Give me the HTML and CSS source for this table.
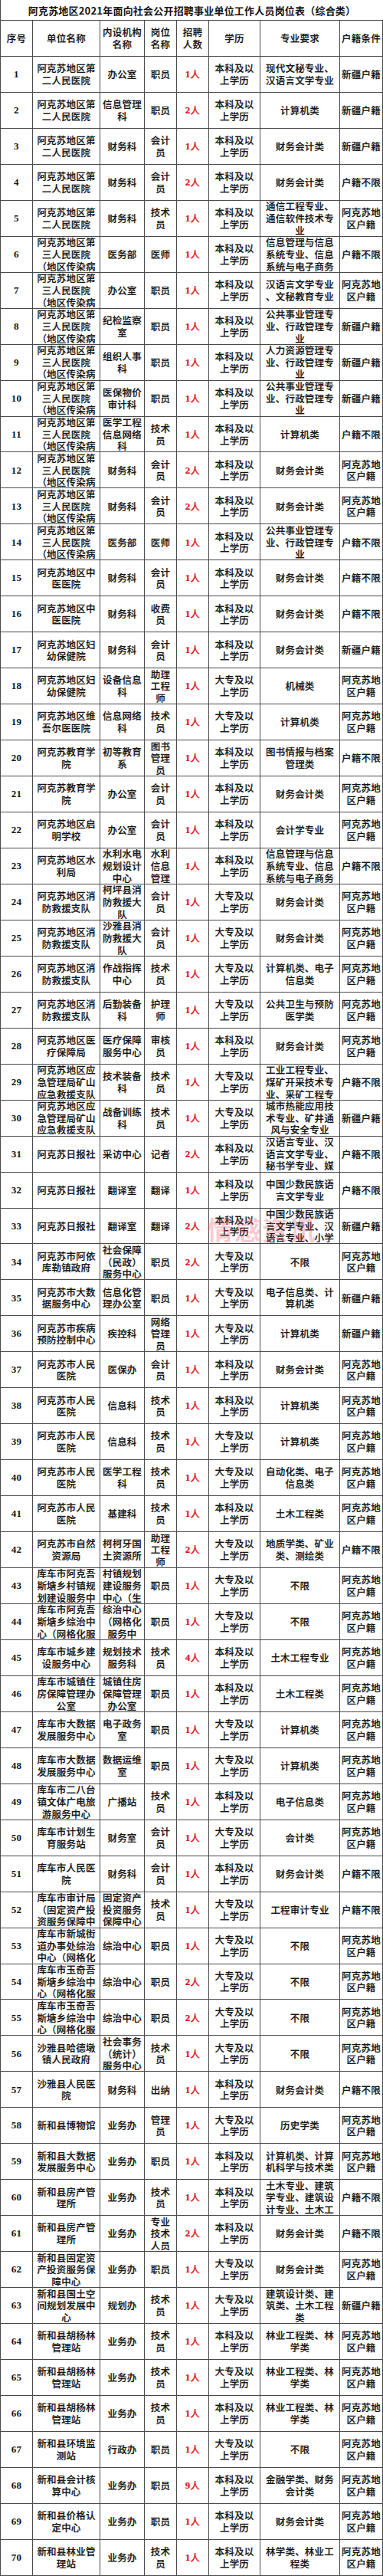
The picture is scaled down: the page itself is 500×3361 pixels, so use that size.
FILE: index.html
```html
<!DOCTYPE html>
<html lang="zh-CN">
<head>
<meta charset="utf-8">
<title>阿克苏地区2021年面向社会公开招聘事业单位工作人员岗位表（综合类）</title>
<link rel="stylesheet" href="styles.css">
</head>
<body>
<div class="page">
<div class="sheet">
<div class="title">阿克苏地区2021年面向社会公开招聘事业单位工作人员岗位表（综合类）</div>
<div class="c h">序号</div><div class="c h">单位名称</div><div class="c h">内设机构<br>名称</div><div class="c h">岗位<br>名称</div><div class="c h">招聘<br>人数</div><div class="c h">学历</div><div class="c h">专业要求</div><div class="c h">户籍条件</div>

<div class="c n">1</div><div class="c">阿克苏地区第<br>二人民医院</div><div class="c">办公室</div><div class="c">职员</div><div class="c r"><b>1</b>人</div><div class="c">本科及以<br>上学历</div><div class="c">现代文秘专业、<br>汉语言文学专业</div><div class="c">新疆户籍</div>
<div class="c n">2</div><div class="c">阿克苏地区第<br>二人民医院</div><div class="c">信息管理<br>科</div><div class="c">职员</div><div class="c r"><b>2</b>人</div><div class="c">本科及以<br>上学历</div><div class="c">计算机类</div><div class="c">新疆户籍</div>
<div class="c n">3</div><div class="c">阿克苏地区第<br>二人民医院</div><div class="c">财务科</div><div class="c">会计<br>员</div><div class="c r"><b>1</b>人</div><div class="c">本科及以<br>上学历</div><div class="c">财务会计类</div><div class="c">新疆户籍</div>
<div class="c n">4</div><div class="c">阿克苏地区第<br>二人民医院</div><div class="c">财务科</div><div class="c">会计<br>员</div><div class="c r"><b>2</b>人</div><div class="c">本科及以<br>上学历</div><div class="c">财务会计类</div><div class="c">户籍不限</div>
<div class="c n">5</div><div class="c">阿克苏地区第<br>二人民医院</div><div class="c">财务科</div><div class="c">技术<br>员</div><div class="c r"><b>1</b>人</div><div class="c">本科及以<br>上学历</div><div class="c">通信工程专业、<br>通信软件技术专<br>业</div><div class="c">阿克苏地<br>区户籍</div>
<div class="c n">6</div><div class="c">阿克苏地区第<br>三人民医院<br>（地区传染病</div><div class="c">医务部</div><div class="c">医师</div><div class="c r"><b>1</b>人</div><div class="c">本科及以<br>上学历</div><div class="c">信息管理与信息<br>系统专业、信息<br>系统与电子商务</div><div class="c">户籍不限</div>
<div class="c n">7</div><div class="c">阿克苏地区第<br>三人民医院<br>（地区传染病</div><div class="c">办公室</div><div class="c">职员</div><div class="c r"><b>1</b>人</div><div class="c">本科及以<br>上学历</div><div class="c">汉语言文学专业<br>、文秘教育专业</div><div class="c">阿克苏地<br>区户籍</div>
<div class="c n">8</div><div class="c">阿克苏地区第<br>三人民医院<br>（地区传染病</div><div class="c">纪检监察<br>室</div><div class="c">职员</div><div class="c r"><b>1</b>人</div><div class="c">本科及以<br>上学历</div><div class="c">公共事业管理专<br>业、行政管理专<br>业</div><div class="c">新疆户籍</div>
<div class="c n">9</div><div class="c">阿克苏地区第<br>三人民医院<br>（地区传染病</div><div class="c">组织人事<br>科</div><div class="c">职员</div><div class="c r"><b>1</b>人</div><div class="c">本科及以<br>上学历</div><div class="c">人力资源管理专<br>业、行政管理专<br>业</div><div class="c">新疆户籍</div>
<div class="c n">10</div><div class="c">阿克苏地区第<br>三人民医院<br>（地区传染病</div><div class="c">医保物价<br>审计科</div><div class="c">职员</div><div class="c r"><b>1</b>人</div><div class="c">本科及以<br>上学历</div><div class="c">公共事业管理专<br>业、行政管理专<br>业</div><div class="c">新疆户籍</div>
<div class="c n">11</div><div class="c">阿克苏地区第<br>三人民医院<br>（地区传染病</div><div class="c">医学工程<br>信息网络<br>科</div><div class="c">技术<br>员</div><div class="c r"><b>1</b>人</div><div class="c">本科及以<br>上学历</div><div class="c">计算机类</div><div class="c">户籍不限</div>
<div class="c n">12</div><div class="c">阿克苏地区第<br>三人民医院<br>（地区传染病</div><div class="c">财务科</div><div class="c">会计<br>员</div><div class="c r"><b>2</b>人</div><div class="c">本科及以<br>上学历</div><div class="c">财务会计类</div><div class="c">阿克苏地<br>区户籍</div>
<div class="c n">13</div><div class="c">阿克苏地区第<br>三人民医院<br>（地区传染病</div><div class="c">财务科</div><div class="c">会计<br>员</div><div class="c r"><b>2</b>人</div><div class="c">本科及以<br>上学历</div><div class="c">财务会计类</div><div class="c">阿克苏地<br>区户籍</div>
<div class="c n">14</div><div class="c">阿克苏地区第<br>三人民医院<br>（地区传染病</div><div class="c">医务部</div><div class="c">医师</div><div class="c r"><b>1</b>人</div><div class="c">本科及以<br>上学历</div><div class="c">公共事业管理专<br>业、行政管理专<br>业</div><div class="c">户籍不限</div>
<div class="c n">15</div><div class="c">阿克苏地区中<br>医医院</div><div class="c">财务科</div><div class="c">会计<br>员</div><div class="c r"><b>1</b>人</div><div class="c">本科及以<br>上学历</div><div class="c">财务会计类</div><div class="c">户籍不限</div>
<div class="c n">16</div><div class="c">阿克苏地区中<br>医医院</div><div class="c">财务科</div><div class="c">收费<br>员</div><div class="c r"><b>1</b>人</div><div class="c">本科及以<br>上学历</div><div class="c">财务会计类</div><div class="c">户籍不限</div>
<div class="c n">17</div><div class="c">阿克苏地区妇<br>幼保健院</div><div class="c">财务科</div><div class="c">会计<br>员</div><div class="c r"><b>1</b>人</div><div class="c">本科及以<br>上学历</div><div class="c">财务会计类</div><div class="c">新疆户籍</div>
<div class="c n">18</div><div class="c">阿克苏地区妇<br>幼保健院</div><div class="c">设备信息<br>科</div><div class="c">助理<br>工程<br>师</div><div class="c r"><b>1</b>人</div><div class="c">大专及以<br>上学历</div><div class="c">机械类</div><div class="c">阿克苏地<br>区户籍</div>
<div class="c n">19</div><div class="c">阿克苏地区维<br>吾尔医医院</div><div class="c">信息网络<br>科</div><div class="c">技术<br>员</div><div class="c r"><b>1</b>人</div><div class="c">大专及以<br>上学历</div><div class="c">计算机类</div><div class="c">阿克苏地<br>区户籍</div>
<div class="c n">20</div><div class="c">阿克苏教育学<br>院</div><div class="c">初等教育<br>系</div><div class="c">图书<br>管理<br>员</div><div class="c r"><b>1</b>人</div><div class="c">本科及以<br>上学历</div><div class="c">图书情报与档案<br>管理类</div><div class="c">户籍不限</div>
<div class="c n">21</div><div class="c">阿克苏教育学<br>院</div><div class="c">办公室</div><div class="c">会计<br>员</div><div class="c r"><b>1</b>人</div><div class="c">本科及以<br>上学历</div><div class="c">财务会计类</div><div class="c">阿克苏地<br>区户籍</div>
<div class="c n">22</div><div class="c">阿克苏地区启<br>明学校</div><div class="c">办公室</div><div class="c">会计<br>员</div><div class="c r"><b>1</b>人</div><div class="c">本科及以<br>上学历</div><div class="c">会计学专业</div><div class="c">阿克苏地<br>区户籍</div>
<div class="c n">23</div><div class="c">阿克苏地区水<br>利局</div><div class="c">水利水电<br>规划设计<br>中心</div><div class="c">水利<br>信息<br>管理</div><div class="c r"><b>1</b>人</div><div class="c">本科及以<br>上学历</div><div class="c">信息管理与信息<br>系统专业、信息<br>系统与电子商务</div><div class="c">户籍不限</div>
<div class="c n">24</div><div class="c">阿克苏地区消<br>防救援支队</div><div class="c">柯坪县消<br>防救援大<br>队</div><div class="c">会计<br>员</div><div class="c r"><b>1</b>人</div><div class="c">大专及以<br>上学历</div><div class="c">财务会计类</div><div class="c">阿克苏地<br>区户籍</div>
<div class="c n">25</div><div class="c">阿克苏地区消<br>防救援支队</div><div class="c">沙雅县消<br>防救援大<br>队</div><div class="c">会计<br>员</div><div class="c r"><b>1</b>人</div><div class="c">大专及以<br>上学历</div><div class="c">财务会计类</div><div class="c">阿克苏地<br>区户籍</div>
<div class="c n">26</div><div class="c">阿克苏地区消<br>防救援支队</div><div class="c">作战指挥<br>中心</div><div class="c">技术<br>员</div><div class="c r"><b>1</b>人</div><div class="c">大专及以<br>上学历</div><div class="c">计算机类、电子<br>信息类</div><div class="c">阿克苏地<br>区户籍</div>
<div class="c n">27</div><div class="c">阿克苏地区消<br>防救援支队</div><div class="c">后勤装备<br>科</div><div class="c">护理<br>师</div><div class="c r"><b>1</b>人</div><div class="c">大专及以<br>上学历</div><div class="c">公共卫生与预防<br>医学类</div><div class="c">阿克苏地<br>区户籍</div>
<div class="c n">28</div><div class="c">阿克苏地区医<br>疗保障局</div><div class="c">医疗保障<br>服务中心</div><div class="c">审核<br>员</div><div class="c r"><b>1</b>人</div><div class="c">本科及以<br>上学历</div><div class="c">财务会计类</div><div class="c">阿克苏地<br>区户籍</div>
<div class="c n">29</div><div class="c">阿克苏地区应<br>急管理局矿山<br>应急救援支队</div><div class="c">技术装备<br>科</div><div class="c">技术<br>员</div><div class="c r"><b>1</b>人</div><div class="c">大专及以<br>上学历</div><div class="c">工业工程专业、<br>煤矿开采技术专<br>业、采矿工程专</div><div class="c">户籍不限</div>
<div class="c n">30</div><div class="c">阿克苏地区应<br>急管理局矿山<br>应急救援支队</div><div class="c">战备训练<br>科</div><div class="c">技术<br>员</div><div class="c r"><b>1</b>人</div><div class="c">大专及以<br>上学历</div><div class="c">城市热能应用技<br>术专业、矿井通<br>风与安全专业</div><div class="c">新疆户籍</div>
<div class="c n">31</div><div class="c">阿克苏日报社</div><div class="c">采访中心</div><div class="c">记者</div><div class="c r"><b>2</b>人</div><div class="c">本科及以<br>上学历</div><div class="c">汉语言专业、汉<br>语言文学专业、<br>秘书学专业、媒</div><div class="c">户籍不限</div>
<div class="c n">32</div><div class="c">阿克苏日报社</div><div class="c">翻译室</div><div class="c">翻译</div><div class="c r"><b>1</b>人</div><div class="c">本科及以<br>上学历</div><div class="c">中国少数民族语<br>言文学专业</div><div class="c">户籍不限</div>
<div class="c n">33</div><div class="c">阿克苏日报社</div><div class="c">翻译室</div><div class="c">翻译</div><div class="c r"><b>2</b>人</div><div class="c">本科及以<br>上学历</div><div class="c">中国少数民族语<br>言文学专业、汉<br>语言专业、小学</div><div class="c">新疆户籍</div>
<div class="c n">34</div><div class="c">阿克苏市阿依<br>库勒镇政府</div><div class="c">社会保障<br>（民政）<br>服务中心</div><div class="c">职员</div><div class="c r"><b>2</b>人</div><div class="c">大专及以<br>上学历</div><div class="c">不限</div><div class="c">阿克苏地<br>区户籍</div>
<div class="c n">35</div><div class="c">阿克苏市大数<br>据服务中心</div><div class="c">信息化管<br>理办公室</div><div class="c">职员</div><div class="c r"><b>1</b>人</div><div class="c">大专及以<br>上学历</div><div class="c">电子信息类、计<br>算机类</div><div class="c">新疆户籍</div>
<div class="c n">36</div><div class="c">阿克苏市疾病<br>预防控制中心</div><div class="c">疾控科</div><div class="c">网络<br>管理<br>员</div><div class="c r"><b>1</b>人</div><div class="c">大专及以<br>上学历</div><div class="c">计算机类</div><div class="c">新疆户籍</div>
<div class="c n">37</div><div class="c">阿克苏市人民<br>医院</div><div class="c">医保办</div><div class="c">会计<br>员</div><div class="c r"><b>1</b>人</div><div class="c">本科及以<br>上学历</div><div class="c">财务会计类</div><div class="c">阿克苏地<br>区户籍</div>
<div class="c n">38</div><div class="c">阿克苏市人民<br>医院</div><div class="c">信息科</div><div class="c">技术<br>员</div><div class="c r"><b>1</b>人</div><div class="c">本科及以<br>上学历</div><div class="c">计算机类</div><div class="c">阿克苏地<br>区户籍</div>
<div class="c n">39</div><div class="c">阿克苏市人民<br>医院</div><div class="c">信息科</div><div class="c">技术<br>员</div><div class="c r"><b>1</b>人</div><div class="c">大专及以<br>上学历</div><div class="c">计算机类</div><div class="c">阿克苏地<br>区户籍</div>
<div class="c n">40</div><div class="c">阿克苏市人民<br>医院</div><div class="c">医学工程<br>科</div><div class="c">技术<br>员</div><div class="c r"><b>1</b>人</div><div class="c">大专及以<br>上学历</div><div class="c">自动化类、电子<br>信息类</div><div class="c">阿克苏地<br>区户籍</div>
<div class="c n">41</div><div class="c">阿克苏市人民<br>医院</div><div class="c">基建科</div><div class="c">技术<br>员</div><div class="c r"><b>1</b>人</div><div class="c">本科及以<br>上学历</div><div class="c">土木工程类</div><div class="c">阿克苏地<br>区户籍</div>
<div class="c n">42</div><div class="c">阿克苏市自然<br>资源局</div><div class="c">柯柯牙国<br>土资源所</div><div class="c">助理<br>工程<br>师</div><div class="c r"><b>2</b>人</div><div class="c">大专及以<br>上学历</div><div class="c">地质学类、矿业<br>类、测绘类</div><div class="c">户籍不限</div>
<div class="c n">43</div><div class="c">库车市阿克吾<br>斯塘乡村镇规<br>划建设服务中</div><div class="c">村镇规划<br>建设服务<br>中心（生</div><div class="c">职员</div><div class="c r"><b>1</b>人</div><div class="c">大专及以<br>上学历</div><div class="c">不限</div><div class="c">阿克苏地<br>区户籍</div>
<div class="c n">44</div><div class="c">库车市阿克吾<br>斯塘乡综治中<br>心（网格化服</div><div class="c">综治中心<br>（网格化<br>服务中</div><div class="c">职员</div><div class="c r"><b>1</b>人</div><div class="c">大专及以<br>上学历</div><div class="c">不限</div><div class="c">阿克苏地<br>区户籍</div>
<div class="c n">45</div><div class="c">库车市城乡建<br>设服务中心</div><div class="c">规划技术<br>服务科</div><div class="c">技术<br>员</div><div class="c r"><b>4</b>人</div><div class="c">本科及以<br>上学历</div><div class="c">土木工程专业</div><div class="c">阿克苏地<br>区户籍</div>
<div class="c n">46</div><div class="c">库车市城镇住<br>房保障管理办<br>公室</div><div class="c">城镇住房<br>保障管理<br>办公室</div><div class="c">职员</div><div class="c r"><b>1</b>人</div><div class="c">本科及以<br>上学历</div><div class="c">土木工程类</div><div class="c">阿克苏地<br>区户籍</div>
<div class="c n">47</div><div class="c">库车市大数据<br>发展服务中心</div><div class="c">电子政务<br>室</div><div class="c">职员</div><div class="c r"><b>1</b>人</div><div class="c">大专及以<br>上学历</div><div class="c">计算机类</div><div class="c">阿克苏地<br>区户籍</div>
<div class="c n">48</div><div class="c">库车市大数据<br>发展服务中心</div><div class="c">数据运维<br>室</div><div class="c">职员</div><div class="c r"><b>1</b>人</div><div class="c">大专及以<br>上学历</div><div class="c">计算机类</div><div class="c">阿克苏地<br>区户籍</div>
<div class="c n">49</div><div class="c">库车市二八台<br>镇文体广电旅<br>游服务中心</div><div class="c">广播站</div><div class="c">技术<br>员</div><div class="c r"><b>1</b>人</div><div class="c">本科及以<br>上学历</div><div class="c">电子信息类</div><div class="c">阿克苏地<br>区户籍</div>
<div class="c n">50</div><div class="c">库车市计划生<br>育服务站</div><div class="c">财务室</div><div class="c">会计<br>员</div><div class="c r"><b>1</b>人</div><div class="c">大专及以<br>上学历</div><div class="c">会计类</div><div class="c">阿克苏地<br>区户籍</div>
<div class="c n">51</div><div class="c">库车市人民医<br>院</div><div class="c">财务科</div><div class="c">会计<br>员</div><div class="c r"><b>1</b>人</div><div class="c">本科及以<br>上学历</div><div class="c">财务会计类</div><div class="c">户籍不限</div>
<div class="c n">52</div><div class="c">库车市审计局<br>（固定资产投<br>资服务保障中</div><div class="c">固定资产<br>投资服务<br>保障中心</div><div class="c">技术<br>员</div><div class="c r"><b>1</b>人</div><div class="c">大专及以<br>上学历</div><div class="c">工程审计专业</div><div class="c">户籍不限</div>
<div class="c n">53</div><div class="c">库车市新城街<br>道办事处综治<br>中心（网格化</div><div class="c">综治中心</div><div class="c">职员</div><div class="c r"><b>1</b>人</div><div class="c">大专及以<br>上学历</div><div class="c">不限</div><div class="c">阿克苏地<br>区户籍</div>
<div class="c n">54</div><div class="c">库车市玉奇吾<br>斯塘乡综治中<br>心（网格化服</div><div class="c">综治中心</div><div class="c">职员</div><div class="c r"><b>2</b>人</div><div class="c">大专及以<br>上学历</div><div class="c">不限</div><div class="c">阿克苏地<br>区户籍</div>
<div class="c n">55</div><div class="c">库车市玉奇吾<br>斯塘乡综治中<br>心（网格化服</div><div class="c">综治中心</div><div class="c">职员</div><div class="c r"><b>2</b>人</div><div class="c">大专及以<br>上学历</div><div class="c">不限</div><div class="c">阿克苏地<br>区户籍</div>
<div class="c n">56</div><div class="c">沙雅县哈德墩<br>镇人民政府</div><div class="c">社会事务<br>（统计）<br>服务中心</div><div class="c">技术<br>员</div><div class="c r"><b>1</b>人</div><div class="c">大专及以<br>上学历</div><div class="c">不限</div><div class="c">阿克苏地<br>区户籍</div>
<div class="c n">57</div><div class="c">沙雅县人民医<br>院</div><div class="c">财务科</div><div class="c">出纳</div><div class="c r"><b>1</b>人</div><div class="c">本科及以<br>上学历</div><div class="c">财务会计类</div><div class="c">户籍不限</div>
<div class="c n">58</div><div class="c">新和县博物馆</div><div class="c">业务办</div><div class="c">管理<br>员</div><div class="c r"><b>1</b>人</div><div class="c">大专及以<br>上学历</div><div class="c">历史学类</div><div class="c">阿克苏地<br>区户籍</div>
<div class="c n">59</div><div class="c">新和县大数据<br>发展服务中心</div><div class="c">业务办</div><div class="c">职员</div><div class="c r"><b>1</b>人</div><div class="c">本科及以<br>上学历</div><div class="c">计算机类、计算<br>机科学与技术类</div><div class="c">阿克苏地<br>区户籍</div>
<div class="c n">60</div><div class="c">新和县房产管<br>理所</div><div class="c">业务办</div><div class="c">技术<br>员</div><div class="c r"><b>1</b>人</div><div class="c">本科及以<br>上学历</div><div class="c">土木专业、建筑<br>学专业、建筑设<br>计专业、土木工</div><div class="c">户籍不限</div>
<div class="c n">61</div><div class="c">新和县房产管<br>理所</div><div class="c">业务办</div><div class="c">专业<br>技术<br>人员</div><div class="c r"><b>2</b>人</div><div class="c">本科及以<br>上学历</div><div class="c">财务会计类</div><div class="c">户籍不限</div>
<div class="c n">62</div><div class="c">新和县固定资<br>产投资服务保<br>障中心</div><div class="c">业务办</div><div class="c">职员</div><div class="c r"><b>1</b>人</div><div class="c">大专及以<br>上学历</div><div class="c">财务会计类</div><div class="c">阿克苏地<br>区户籍</div>
<div class="c n">63</div><div class="c">新和县国土空<br>间规划发展中<br>心</div><div class="c">规划办</div><div class="c">技术<br>员</div><div class="c r"><b>1</b>人</div><div class="c">大专及以<br>上学历</div><div class="c">建筑设计类、建<br>筑类、土木工程<br>类</div><div class="c">新疆户籍</div>
<div class="c n">64</div><div class="c">新和县胡杨林<br>管理站</div><div class="c">业务办</div><div class="c">技术<br>员</div><div class="c r"><b>1</b>人</div><div class="c">本科及以<br>上学历</div><div class="c">林业工程类、林<br>学类</div><div class="c">阿克苏地<br>区户籍</div>
<div class="c n">65</div><div class="c">新和县胡杨林<br>管理站</div><div class="c">业务办</div><div class="c">技术<br>员</div><div class="c r"><b>1</b>人</div><div class="c">大专及以<br>上学历</div><div class="c">林业工程类、林<br>学类</div><div class="c">阿克苏地<br>区户籍</div>
<div class="c n">66</div><div class="c">新和县胡杨林<br>管理站</div><div class="c">业务办</div><div class="c">技术<br>员</div><div class="c r"><b>1</b>人</div><div class="c">本科及以<br>上学历</div><div class="c">林业工程类、林<br>学类</div><div class="c">阿克苏地<br>区户籍</div>
<div class="c n">67</div><div class="c">新和县环境监<br>测站</div><div class="c">行政办</div><div class="c">职员</div><div class="c r"><b>1</b>人</div><div class="c">大专及以<br>上学历</div><div class="c">不限</div><div class="c">阿克苏地<br>区户籍</div>
<div class="c n">68</div><div class="c">新和县会计核<br>算中心</div><div class="c">业务办</div><div class="c">职员</div><div class="c r"><b>9</b>人</div><div class="c">本科及以<br>上学历</div><div class="c">金融学类、财务<br>会计类</div><div class="c">阿克苏地<br>区户籍</div>
<div class="c n">69</div><div class="c">新和县价格认<br>定中心</div><div class="c">业务办</div><div class="c">职员</div><div class="c r"><b>1</b>人</div><div class="c">本科及以<br>上学历</div><div class="c">财务会计类</div><div class="c">阿克苏地<br>区户籍</div>
<div class="c n">70</div><div class="c">新和县林业管<br>理站</div><div class="c">业务办</div><div class="c">技术<br>员</div><div class="c r"><b>1</b>人</div><div class="c">本科及以<br>上学历</div><div class="c">林学类、林业工<br>程类</div><div class="c">阿克苏地<br>区户籍</div>
</div>
<div class="watermark">情感资讯</div>
</div>
</body>
</html>
```

FILE: styles.css
```css
html, body {
  margin: 0;
  padding: 0;
  background: #ffffff;
}

body {
  font-family: "Noto Sans CJK SC", "Noto Sans", sans-serif;
  color: #141414;
}

.page {
  position: relative;
  width: 500px;
}

.sheet {
  display: grid;
  width: 500px;
  box-sizing: border-box;
  border-left: 1px solid #4a4a4a;
  grid-template-columns: 42px 88px 58px 42px 42px 67px 104px 56px;
  grid-template-rows: 27px 47px;
  grid-auto-rows: 46.96px;
}

.title {
  grid-column: 1 / -1;
  display: flex;
  align-items: center;
  justify-content: center;
  border-bottom: 1px solid #4a4a4a;
  font-size: 13px;
  font-weight: 700;
  letter-spacing: 0.2px;
  white-space: nowrap;
}

.c {
  box-sizing: border-box;
  border-right: 1px solid #4a4a4a;
  border-bottom: 1px solid #4a4a4a;
  display: flex;
  align-items: center;
  justify-content: center;
  text-align: center;
  white-space: nowrap;
  font-size: 12.5px;
  font-weight: 500;
  line-height: 15.7px;
  letter-spacing: 0.2px;
  -webkit-text-stroke: 0.2px currentColor;
}

.n {
  font-family: "Liberation Serif", serif;
  font-weight: 700;
  font-size: 13px;
  letter-spacing: 0.3px;
  -webkit-text-stroke: 0;
}

.r {
  color: #e0141e;
}

.r b {
  font-family: "Liberation Serif", serif;
  font-weight: 700;
  font-size: 13px;
}

.watermark {
  position: absolute;
  left: 270px;
  top: 1586px;
  font-size: 34px;
  font-weight: 700;
  line-height: 36px;
  letter-spacing: 2px;
  color: rgba(236, 90, 110, 0.32);
  pointer-events: none;
  white-space: nowrap;
}
```
